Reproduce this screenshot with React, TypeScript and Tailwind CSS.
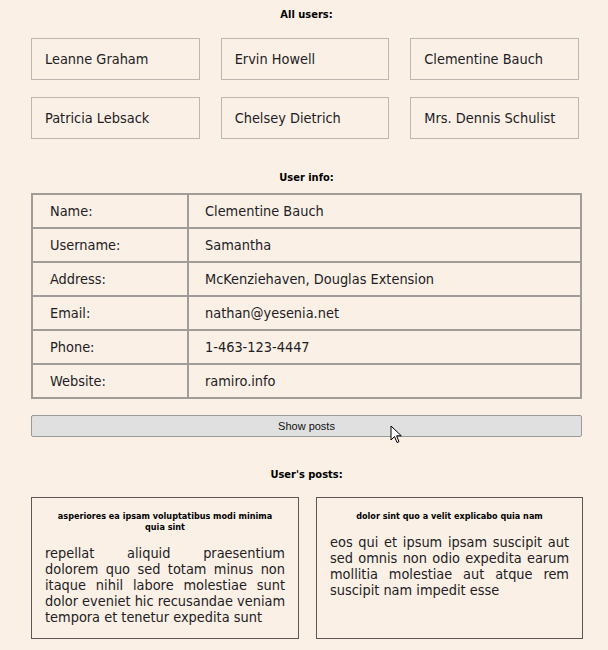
import React from "react";

const users = [
  "Leanne Graham",
  "Ervin Howell",
  "Clementine Bauch",
  "Patricia Lebsack",
  "Chelsey Dietrich",
  "Mrs. Dennis Schulist",
];

const info: [string, string][] = [
  ["Name:", "Clementine Bauch"],
  ["Username:", "Samantha"],
  ["Address:", "McKenziehaven, Douglas Extension"],
  ["Email:", "nathan@yesenia.net"],
  ["Phone:", "1-463-123-4447"],
  ["Website:", "ramiro.info"],
];

const posts = [
  {
    title: "asperiores ea ipsam voluptatibus modi minima quia sint",
    lines: [
      "repellat aliquid praesentium",
      "dolorem quo sed totam minus non",
      "itaque nihil labore molestiae sunt",
      "dolor eveniet hic recusandae veniam",
      "tempora et tenetur expedita sunt",
    ],
  },
  {
    title: "dolor sint quo a velit explicabo quia nam",
    lines: [
      "eos qui et ipsum ipsam suscipit aut",
      "sed omnis non odio expedita earum",
      "mollitia molestiae aut atque rem",
      "suscipit nam impedit esse",
    ],
  },
];

const font = "font-['DejaVu_Sans_Condensed','DejaVu_Sans',sans-serif]";

export default function App() {
  return (
    <div className={`min-h-[650px] bg-[#faf0e6] text-[#221c24] ${font}`}>
      <div className="pl-[31px] w-[582px] pt-[8px] flex flex-col">
        <h2 className="text-center text-[11px] font-bold leading-[14px] text-black">All users:</h2>
        <div className="mt-[16px] grid grid-cols-3 gap-x-[21px] gap-y-[17px] w-[548px]">
          {users.map((u) => (
            <div
              key={u}
              className="h-[42px] border border-[#bdb5b0] flex items-center px-[13px] pt-[1px] text-[14.4px]"
            >
              {u}
            </div>
          ))}
        </div>

        <h2 className="mt-[32px] text-center text-[11px] font-bold leading-[14px] text-black">User info:</h2>
        <table className="mt-[8px] w-[551px] border-collapse border-2 border-[#a09c9a] text-[14.4px]">
          <tbody>
            {info.map(([k, v]) => (
              <tr key={k} className="h-[34px]">
                <td className="w-[156px] border-2 border-[#a09c9a] pl-[17px] pt-[1px] pb-0">{k}</td>
                <td className="border-2 border-[#a09c9a] pl-[16px] pt-[1px] pb-0">{v}</td>
              </tr>
            ))}
          </tbody>
        </table>

        <div className="relative mt-[16px]">
          <button className="block w-[551px] h-[22px] bg-[#e0e0e0] border border-[#9a9a9a] rounded-[2px] text-[11px] text-[#111] font-['Liberation_Sans',Arial,sans-serif] leading-none">
            Show posts
          </button>
          <svg
            className="absolute left-[359px] top-[10px]"
            width="13"
            height="19"
            viewBox="0 0 13 19"
          >
            <path
              d="M1 1 L1 15 L4.5 11.5 L7 17.5 L9 16.7 L6.6 10.8 L11.3 10.8 Z"
              fill="#fff"
              stroke="#000"
              strokeWidth="1"
              strokeLinejoin="round"
            />
          </svg>
        </div>

        <h2 className="mt-[31px] text-center text-[11px] font-bold leading-[14px] text-black">User's posts:</h2>
        <div className="mt-[15px] flex gap-[17px] w-[552px]">
          {posts.map((p) => (
            <div
              key={p.title}
              className="w-[268px] h-[142px] border border-[#5e5757] px-[13px] pt-[13px]"
            >
              <h3 className="text-center text-[9px] font-bold leading-[11px] text-black px-[9px]">{p.title}</h3>
              <p className="mt-[12px] text-[14.4px] leading-[16px] text-justify">
                {p.lines.map((l, i) => (
                  <span
                    key={i}
                    className={
                      i < p.lines.length - 1
                        ? "block whitespace-nowrap [text-align-last:justify]"
                        : "block whitespace-nowrap"
                    }
                  >
                    {l}
                  </span>
                ))}
              </p>
            </div>
          ))}
        </div>
      </div>
    </div>
  );
}
